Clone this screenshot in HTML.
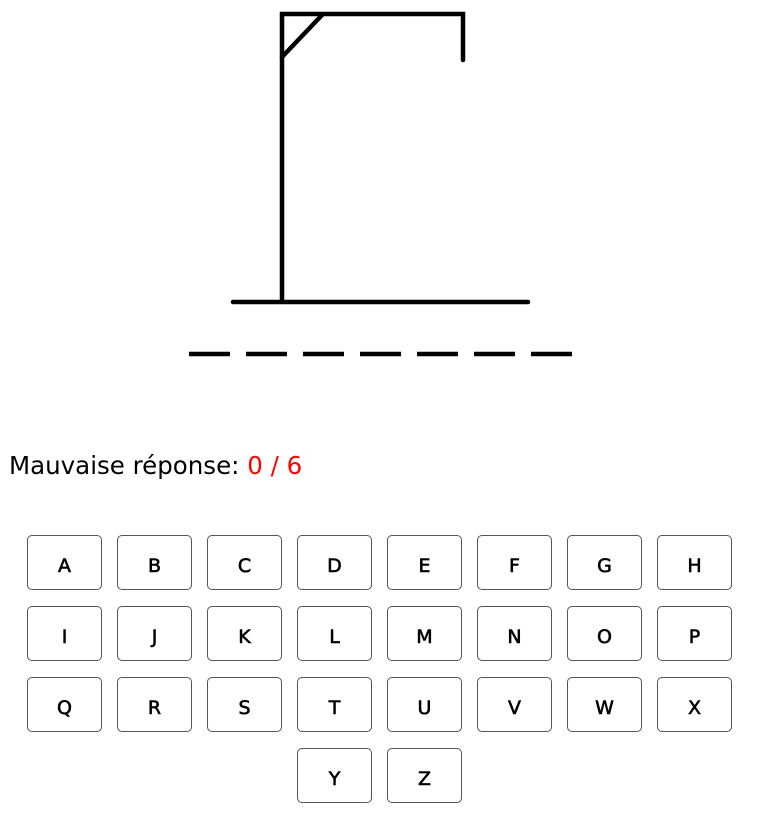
<!DOCTYPE html>
<html><head><meta charset="utf-8"><style>
body{margin:0;width:769px;height:818px;background:#fff;position:relative;font-family:"DejaVu Sans","Liberation Sans",sans-serif;overflow:hidden}
svg{position:absolute;left:0;top:0}
.lbl{position:absolute;left:9px;top:450px;font-size:24.5px;color:#000;line-height:32px}
.lbl span{color:#f00}
.b{position:absolute;width:73px;height:53px;border:1px solid #555;border-radius:5px;box-sizing:content-box;text-align:center;line-height:60px;font-size:19px;font-weight:normal;color:#000;-webkit-text-stroke:0.6px #000}
</style></head><body>
<svg width="769" height="400">
<g stroke="#000" stroke-width="4.5" stroke-linecap="round" fill="none">
<path d="M282 300V14H463V60"/>
<path d="M282 57L323 14"/>
<path d="M233 302H528"/>
</g>
<g stroke="#000" stroke-width="4.5">
<path d="M189 354h41M246 354h41M303 354h41M360 354h41M417 354h41M474 354h41M531 354h41"/>
</g>
</svg>
<div class="lbl">Mauvaise réponse: <span>0 / 6</span></div>
<div class="b" style="left:27px;top:535px">A</div>
<div class="b" style="left:117px;top:535px">B</div>
<div class="b" style="left:207px;top:535px">C</div>
<div class="b" style="left:297px;top:535px">D</div>
<div class="b" style="left:387px;top:535px">E</div>
<div class="b" style="left:477px;top:535px">F</div>
<div class="b" style="left:567px;top:535px">G</div>
<div class="b" style="left:657px;top:535px">H</div>
<div class="b" style="left:27px;top:606px">I</div>
<div class="b" style="left:117px;top:606px">J</div>
<div class="b" style="left:207px;top:606px">K</div>
<div class="b" style="left:297px;top:606px">L</div>
<div class="b" style="left:387px;top:606px">M</div>
<div class="b" style="left:477px;top:606px">N</div>
<div class="b" style="left:567px;top:606px">O</div>
<div class="b" style="left:657px;top:606px">P</div>
<div class="b" style="left:27px;top:677px">Q</div>
<div class="b" style="left:117px;top:677px">R</div>
<div class="b" style="left:207px;top:677px">S</div>
<div class="b" style="left:297px;top:677px">T</div>
<div class="b" style="left:387px;top:677px">U</div>
<div class="b" style="left:477px;top:677px">V</div>
<div class="b" style="left:567px;top:677px">W</div>
<div class="b" style="left:657px;top:677px">X</div>
<div class="b" style="left:297px;top:748px">Y</div>
<div class="b" style="left:387px;top:748px">Z</div>
</body></html>
